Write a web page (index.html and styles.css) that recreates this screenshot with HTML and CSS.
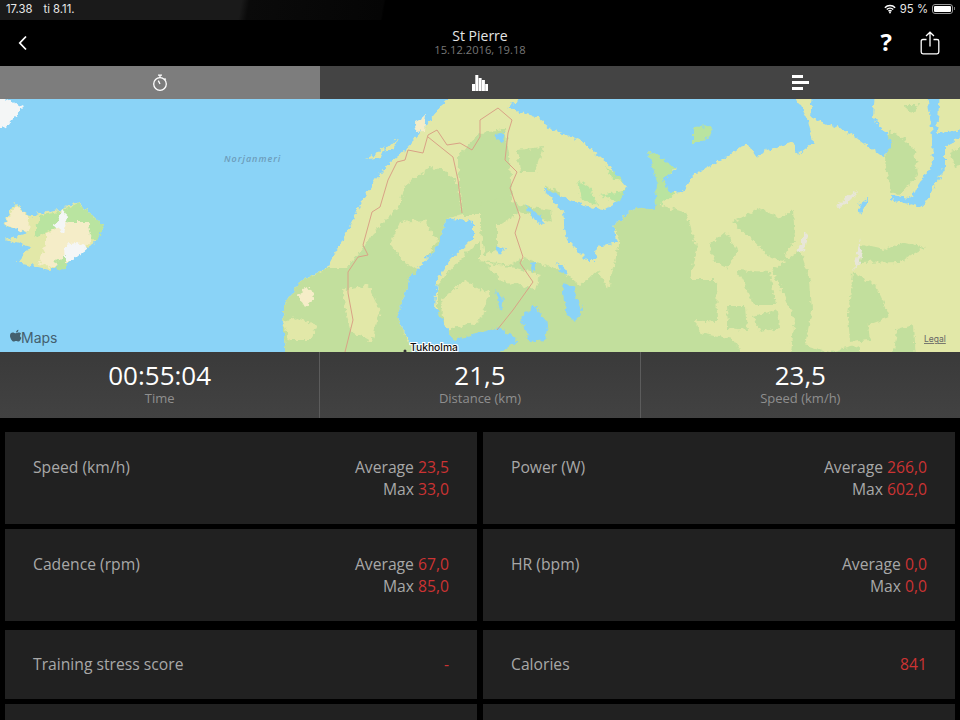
FILE: index.html
```html
<!DOCTYPE html>
<html lang="en">
    <head>
        <meta charset="UTF-8" />
        <title>St Pierre</title>
        <link rel="stylesheet" href="styles.css">
    </head>
    <body>
        <div class="status">
            <div class="status-left"><span>17.38</span><span>ti 8.11.</span></div>
            <div class="status-right">
                <svg class="wifi" width="12" height="10" viewBox="0 0 14 11">
                    <path d="M1 4 A8.5 8.5 0 0 1 13 4" />
                    <path d="M3.2 6.2 A5.4 5.4 0 0 1 10.8 6.2" />
                    <path d="M5.2 8.2 A2.6 2.6 0 0 1 8.8 8.2" />
                    <circle cx="7" cy="9.6" r="1.1" />
                </svg>
                <span>95 %</span>
                <div class="battery"><div class="battery-fill"></div></div>
            </div>
        </div>

        <div class="nav">
            <svg class="back" width="12" height="16" viewBox="0 0 12 16">
                <path d="M9 1.5 L2.8 8 L9 14.5" />
            </svg>
            <div class="nav-title">
                <div class="nav-name">St Pierre</div>
                <div class="nav-date">15.12.2016, 19.18</div>
            </div>
            <div class="nav-actions">
                <span class="help">?</span>
                <svg class="share" width="20" height="24" viewBox="0 0 20 24">
                    <path d="M6.5 8.5 H3 Q1.2 8.5 1.2 10.3 V21 Q1.2 22.8 3 22.8 H17 Q18.8 22.8 18.8 21 V10.3 Q18.8 8.5 17 8.5 H13.5" />
                    <path d="M10 15.5 V1.5 M6 5 L10 1.2 L14 5" />
                </svg>
            </div>
        </div>

        <div class="tabs">
            <div class="tab tab-active">
                <svg class="stopwatch" width="16" height="18" viewBox="0 0 16 18">
                    <circle cx="8" cy="10" r="6.3" />
                    <path d="M6 1.2 H10 M8 1.2 V3.7 M12.6 4.4 L13.8 5.6 M8 10 L6.3 6.6" />
                </svg>
            </div>
            <div class="tab">
                <svg width="16" height="16" viewBox="0 0 16 16">
                    <rect x="0" y="9" width="3" height="7" />
                    <rect x="3.3" y="0" width="3" height="16" />
                    <rect x="6.6" y="3" width="3" height="13" />
                    <rect x="9.9" y="5" width="3" height="11" />
                    <rect x="13.2" y="9" width="2.8" height="7" />
                </svg>
            </div>
            <div class="tab">
                <svg width="17" height="15" viewBox="0 0 17 15">
                    <rect x="0" y="0" width="11" height="3" />
                    <rect x="0" y="6" width="17" height="3" />
                    <rect x="0" y="12" width="11" height="3" />
                </svg>
            </div>
        </div>

        <svg class="map" width="960" height="253" viewBox="0 99 960 253">
            <defs>
                <filter id="rough" x="0" y="0" width="100%" height="100%" color-interpolation-filters="sRGB">
                    <feTurbulence type="fractalNoise" baseFrequency="0.22" numOctaves="2" seed="4" result="noise" />
                    <feDisplacementMap in="SourceGraphic" in2="noise" scale="7" xChannelSelector="R" yChannelSelector="G" />
                    <feGaussianBlur stdDeviation="0.4" />
                </filter>
            </defs>
            <rect class="sea" x="0" y="99" width="960" height="253" />

            <g filter="url(#rough)">
                <polygon class="ice" points="-8,92 23,108 6,127 -8,130" />

                <!-- Iceland -->
                <polygon class="land" points="3,225 15,203 30,217 40,213 60,210 78,202 103,225 95,243 67,263 50,270 18,262 30,247 5,240 28,233" />
                <polygon class="grass" points="33,238 40,215 60,212 78,203 103,225 97,240 88,238 88,222 70,222 48,232" />
                <polygon class="sand" points="46,234 68,222 88,222 92,240 67,263 50,268 38,262 46,245" />
                <polygon class="sand" points="4,224 16,205 30,218 29,232 18,230" />
                <polygon class="ice" points="55,226 62,210 68,217 64,233" />
                <polygon class="ice" points="64,245 78,243 88,248 72,261 65,261" />
                <polygon class="grass" points="55,262 66,256 66,268 58,270" />

                <!-- mainland -->
                <polygon class="land" points="285,360 283,307 300,282 328,267 337,250 353,220 362,200 375,180 390,163 405,150 420,133 430,120 440,107 457,92 970,92 970,360" />
                <polygon class="land" points="365,160 378,152 385,146 380,157" />
                <polygon class="land" points="385,150 398,138 392,150" />
                <polygon class="land" points="793,95 805,106 810,118 800,116" />

                <polygon class="forest" points="285,360 283,307 300,282 328,268 347,268 365,245 380,225 400,205 405,185 430,167 445,170 458,185 462,215 447,218 437,247 410,277 397,317 417,360" />
                <polygon class="land" points="390,245 400,222 425,220 437,240 420,272 405,262" />
                <polygon class="land" points="342,290 368,285 380,310 372,342 350,330" />
                <polygon class="land" points="283,322 297,318 317,325 310,340 290,340" />
                <polygon class="sand" points="297,294 308,287 316,298 305,307" />
                <polygon class="sand" points="414,122 426,116 424,131 416,132" />

                <polygon class="forest" points="457,157 480,133 505,130 510,160 512,200 495,212 480,215 462,215" />
                <polygon class="forest" points="517,150 543,147 535,172 520,172" />
                <polygon class="forest" points="545,185 560,193 565,208 552,200" />
                <polygon class="grass" points="578,180 590,188 597,205 582,200" />
                <polygon class="grass" points="606,168 622,175 624,183 612,178" />

                <polygon class="forest" points="437,285 458,262 480,240 480,260 510,265 525,258 560,270 580,285 598,270 608,290 620,240 613,225 637,207 660,205 687,213 697,250 690,280 716,280 717,322 694,320 700,333 733,340 747,360 437,360" />
                <polygon class="forest" points="480,205 500,198 520,205 550,210 552,222 520,212 500,225 480,225" />
                <polygon class="forest" points="480,225 497,222 497,250 485,255" />
                <polygon class="land" points="441,300 465,280 480,290 490,292 480,322 445,330" />
                <polygon class="land" points="485,262 515,268 540,275 535,290 500,280" />
                <polygon class="grass" points="600,195 622,205 640,207 660,205 675,193 665,180 677,166 648,150 656,185" />

                <polygon class="forest" points="710,245 725,232 738,250 728,268 715,262" />
                <polygon class="forest" points="733,222 760,208 780,218 793,210 795,240 785,255 795,262 770,258 748,235" />
                <polygon class="forest" points="737,270 770,272 775,305 755,305" />
                <polygon class="forest" points="727,306 745,306 747,330 728,328" />
                <polygon class="forest" points="753,316 778,310 780,328 760,332" />
                <polygon class="forest" points="773,270 800,250 810,280 812,310 805,345 830,352 860,345 860,360 790,360 795,320" />
                <polygon class="forest" points="862,245 885,250 905,242 925,247 900,262 860,263" />
                <polygon class="forest" points="853,273 875,285 890,317 868,325 870,340 850,342 848,315" />
                <polygon class="forest" points="897,330 913,325 915,360 893,360" />
                <polygon class="forest" points="888,130 905,140 915,150 918,175 900,195 890,190 885,160" />
                <polygon class="forest" points="950,152 965,145 965,165 955,167" />
                <polygon class="forest" points="905,105 918,105 915,112 906,110" />
                <polygon class="grayland" points="797,253 804,232 808,236 805,250" />
                <polygon class="grayland" points="854,270 860,238 862,250 860,262" />
                <polygon class="grayland" points="836,206 856,190 854,197 840,208" />
            </g>

            <g filter="url(#rough)">
                <!-- Barents and White Sea -->
                <polygon class="sea" points="530,92 508,107 520,112 537,117 552,130 580,140 607,163 627,187 620,200 603,210 577,203 543,188 563,213 567,240 587,260 595,260 597,247 618,243 613,225 637,207 655,210 657,183 648,150 677,168 663,180 670,193 683,192 693,175 727,157 747,143 757,158 767,150 793,142 798,155 813,142 808,120 793,92" />
                <polygon class="sea" points="812,92 810,117 850,133 883,157 893,142 873,117 875,92" />
                <polygon class="sea" points="927,92 932,137 933,163 910,198 890,195 890,200 923,207 945,167 945,147 965,133 965,130 937,133 940,92" />
                <polygon class="grass" points="693,127 712,126 711,135 700,143 693,143" />

                <!-- Gulf of Bothnia and Finland -->
                <polygon class="sea" points="447,218 473,222 473,238 450,260 437,280 435,307 453,340 480,333 500,327 517,340 497,356 417,356 397,317 410,277 437,247" />

                <!-- lakes -->
                <polygon class="sea" points="520,318 535,305 548,325 545,340 530,342" />
                <polygon class="sea" points="562,282 572,285 582,310 575,322 565,312" />
                <polygon class="sea" points="525,205 540,215 545,225 535,220" />
                <polygon class="sea" points="530,263 537,262 532,272" />
                <polygon class="sea" points="557,262 565,268 568,275 560,272" />
                <polygon class="sea" points="493,135 505,132 503,143" />
                <polygon class="sea" points="495,245 505,248 500,256" />
                <polygon class="sea" points="495,290 505,300 500,310" />
                <polygon class="sea" points="858,205 870,197 860,215" />
            </g>

            <polyline class="border" points="345,352 353,320 348,293 348,272 358,257 368,255 363,245 372,212 380,207 388,180 397,162 405,160 408,150 423,153 428,135 437,130 447,145 460,143 472,150 480,137 480,120 498,108 512,120 508,133 505,160 517,172 510,188 520,217 515,233 523,257 520,263 533,282 513,310 497,330" />
            <polyline class="border" points="428,137 453,157 458,180 462,213" />

            <text class="sea-label" x="224" y="162">Norjanmeri</text>
            <circle class="city-dot" cx="405" cy="351" r="1.5" />
            <text class="city-label" x="410" y="351">Tukholma</text>
            <path class="apple" d="M12.6 332.5 C14 332.5 14.8 333.3 16 333.3 C17 333.3 18 332.4 19.3 332.6 C20 332.7 20.6 333.1 21 333.7 C19.5 334.7 19.8 337 21.4 337.8 C20.9 339.4 19.7 341.6 18.5 341.6 C17.5 341.6 17.2 341 16.1 341 C15 341 14.6 341.6 13.7 341.6 C12 341.6 10 338 10 335.8 C10 333.6 11.3 332.5 12.6 332.5 Z M16 332.6 C16 331.2 17 330 18.4 329.8 C18.5 331.2 17.4 332.6 16 332.6 Z" />
            <text class="maps-label" x="21" y="343">Maps</text>
            <text class="legal-label" x="924" y="342">Legal</text>
        </svg>

        <div class="stats">
            <div class="stat">
                <div class="stat-value">00:55:04</div>
                <div class="stat-label">Time</div>
            </div>
            <div class="stat">
                <div class="stat-value">21,5</div>
                <div class="stat-label">Distance (km)</div>
            </div>
            <div class="stat">
                <div class="stat-value">23,5</div>
                <div class="stat-label">Speed (km/h)</div>
            </div>
        </div>

        <div class="cards cards-tall">
            <div class="card">
                <div>Speed (km/h)</div>
                <div class="card-values">
                    <div>Average <span class="red">23,5</span></div>
                    <div>Max <span class="red">33,0</span></div>
                </div>
            </div>
            <div class="card">
                <div>Power (W)</div>
                <div class="card-values">
                    <div>Average <span class="red">266,0</span></div>
                    <div>Max <span class="red">602,0</span></div>
                </div>
            </div>
            <div class="card">
                <div>Cadence (rpm)</div>
                <div class="card-values">
                    <div>Average <span class="red">67,0</span></div>
                    <div>Max <span class="red">85,0</span></div>
                </div>
            </div>
            <div class="card">
                <div>HR (bpm)</div>
                <div class="card-values">
                    <div>Average <span class="red">0,0</span></div>
                    <div>Max <span class="red">0,0</span></div>
                </div>
            </div>
        </div>

        <div class="cards cards-short">
            <div class="card">
                <div>Training stress score</div>
                <div class="red">-</div>
            </div>
            <div class="card">
                <div>Calories</div>
                <div class="red">841</div>
            </div>
            <div class="card"></div>
            <div class="card"></div>
        </div>
    </body>
</html>
```

FILE: styles.css
```css
html,
body {
    margin: 0;
    height: 720px;
    overflow: hidden;
    background-color: #000;
}

body {
    font-family: "Open Sans", sans-serif;
    color: #fff;
}

.status {
    height: 20px;
    display: flex;
    justify-content: space-between;
    align-items: center;
    padding: 0 7px 3px 6px;
    box-sizing: border-box;
    font-family: Inter, sans-serif;
    font-size: 11.3px;
    color: #e8e8e8;
    background: linear-gradient(100deg, #1a1a1a 0, #1a1a1a 238px, #0a0a0a 246px, #050505 378px, #000 380px);
}

.status-left {
    display: flex;
    gap: 11px;
}

.status-right {
    display: flex;
    align-items: center;
    gap: 4px;
}

.wifi path {
    fill: none;
    stroke: #fff;
    stroke-width: 1.7;
}

.wifi circle {
    fill: #fff;
}

.battery {
    position: relative;
    width: 17px;
    height: 6px;
    padding: 1px;
    border: 1px solid #999;
    border-radius: 3px;
}

.battery::after {
    content: "";
    position: absolute;
    right: -3px;
    top: 2px;
    width: 1px;
    height: 3px;
    background-color: #777;
}

.battery-fill {
    width: 100%;
    height: 100%;
    background-color: #fff;
    border-radius: 1px;
}

.nav {
    height: 46px;
    position: relative;
    display: flex;
    justify-content: space-between;
    align-items: center;
    padding: 0 20px 0 17px;
    box-sizing: border-box;
}

.back path {
    fill: none;
    stroke: #fff;
    stroke-width: 1.8;
}

.nav-title {
    position: absolute;
    left: 0;
    right: 0;
    top: 8px;
    text-align: center;
}

.nav-name {
    font-size: 14px;
    line-height: 15px;
    color: #e6e6e6;
}

.nav-date {
    font-size: 11.2px;
    line-height: 13px;
    color: #777;
}

.nav-actions {
    display: flex;
    align-items: center;
    gap: 28px;
}

.help {
    font-size: 24px;
    line-height: 30px;
    font-weight: 700;
    margin-bottom: 3px;
}

.share path {
    fill: none;
    stroke: #fff;
    stroke-width: 1.3;
}

.tabs {
    height: 33px;
    display: flex;
}

.tab {
    flex: 1;
    display: flex;
    justify-content: center;
    align-items: center;
    background-color: #444;
}

.tab svg {
    fill: #fff;
}

.tab-active {
    background-color: #7d7d7d;
}

.tab .stopwatch {
    fill: none;
    stroke: #fff;
    stroke-width: 1.3;
}

.map {
    display: block;
}

.sea {
    fill: #8ad3f7;
}

.land {
    fill: #e2e8a8;
}

.forest {
    fill: #c2df9d;
}

.grass {
    fill: #b9e4a0;
}

.sand {
    fill: #f5edc8;
}

.ice {
    fill: #f4f6f6;
}

.grayland {
    fill: #e8e6d8;
}

.border {
    fill: none;
    stroke: #d9a286;
    stroke-width: 1;
}

.sea-label {
    font-family: "Open Sans", sans-serif;
    font-size: 9px;
    font-style: italic;
    font-weight: 600;
    letter-spacing: 1px;
    fill: #6d9cba;
}

.city-dot {
    fill: #333;
}

.city-label {
    font-family: Inter, sans-serif;
    font-size: 10.3px;
    font-weight: 500;
    fill: #111;
    stroke: #fff;
    stroke-width: 2px;
    paint-order: stroke;
}

.apple {
    fill: #44606f;
}

.maps-label {
    font-family: Inter, sans-serif;
    font-size: 14px;
    fill: #44606f;
}

.legal-label {
    font-family: Inter, sans-serif;
    font-size: 8.5px;
    fill: #666;
    text-decoration: underline;
}

.stats {
    height: 66px;
    display: flex;
    background: linear-gradient(#3a3a3a, #424242);
}

.stat {
    flex: 1;
    text-align: center;
    padding-top: 7px;
    border-left: 1px solid #5c5c5c;
}

.stat:first-child {
    border-left: none;
}

.stat-value {
    font-size: 26px;
    line-height: 32px;
}

.stat-label {
    font-size: 13px;
    line-height: 14px;
    color: #8f8f8f;
}

.cards {
    display: grid;
    grid-template-columns: 472px 472px;
    column-gap: 6px;
    row-gap: 5px;
    padding: 0 5px;
}

.cards-tall {
    margin-top: 14px;
}

.cards-short {
    margin-top: 9px;
}

.card {
    display: flex;
    justify-content: space-between;
    padding: 0 28px;
    background-color: #212121;
    font-size: 15.7px;
    line-height: 22px;
    color: #a8a8a8;
}

.cards-tall .card {
    height: 92px;
    padding-top: 24px;
    box-sizing: border-box;
}

.cards-short .card {
    height: 69px;
    padding-bottom: 2px;
    box-sizing: border-box;
    align-items: center;
}

.card-values {
    text-align: right;
}

.red {
    color: #cc3333;
}
```
